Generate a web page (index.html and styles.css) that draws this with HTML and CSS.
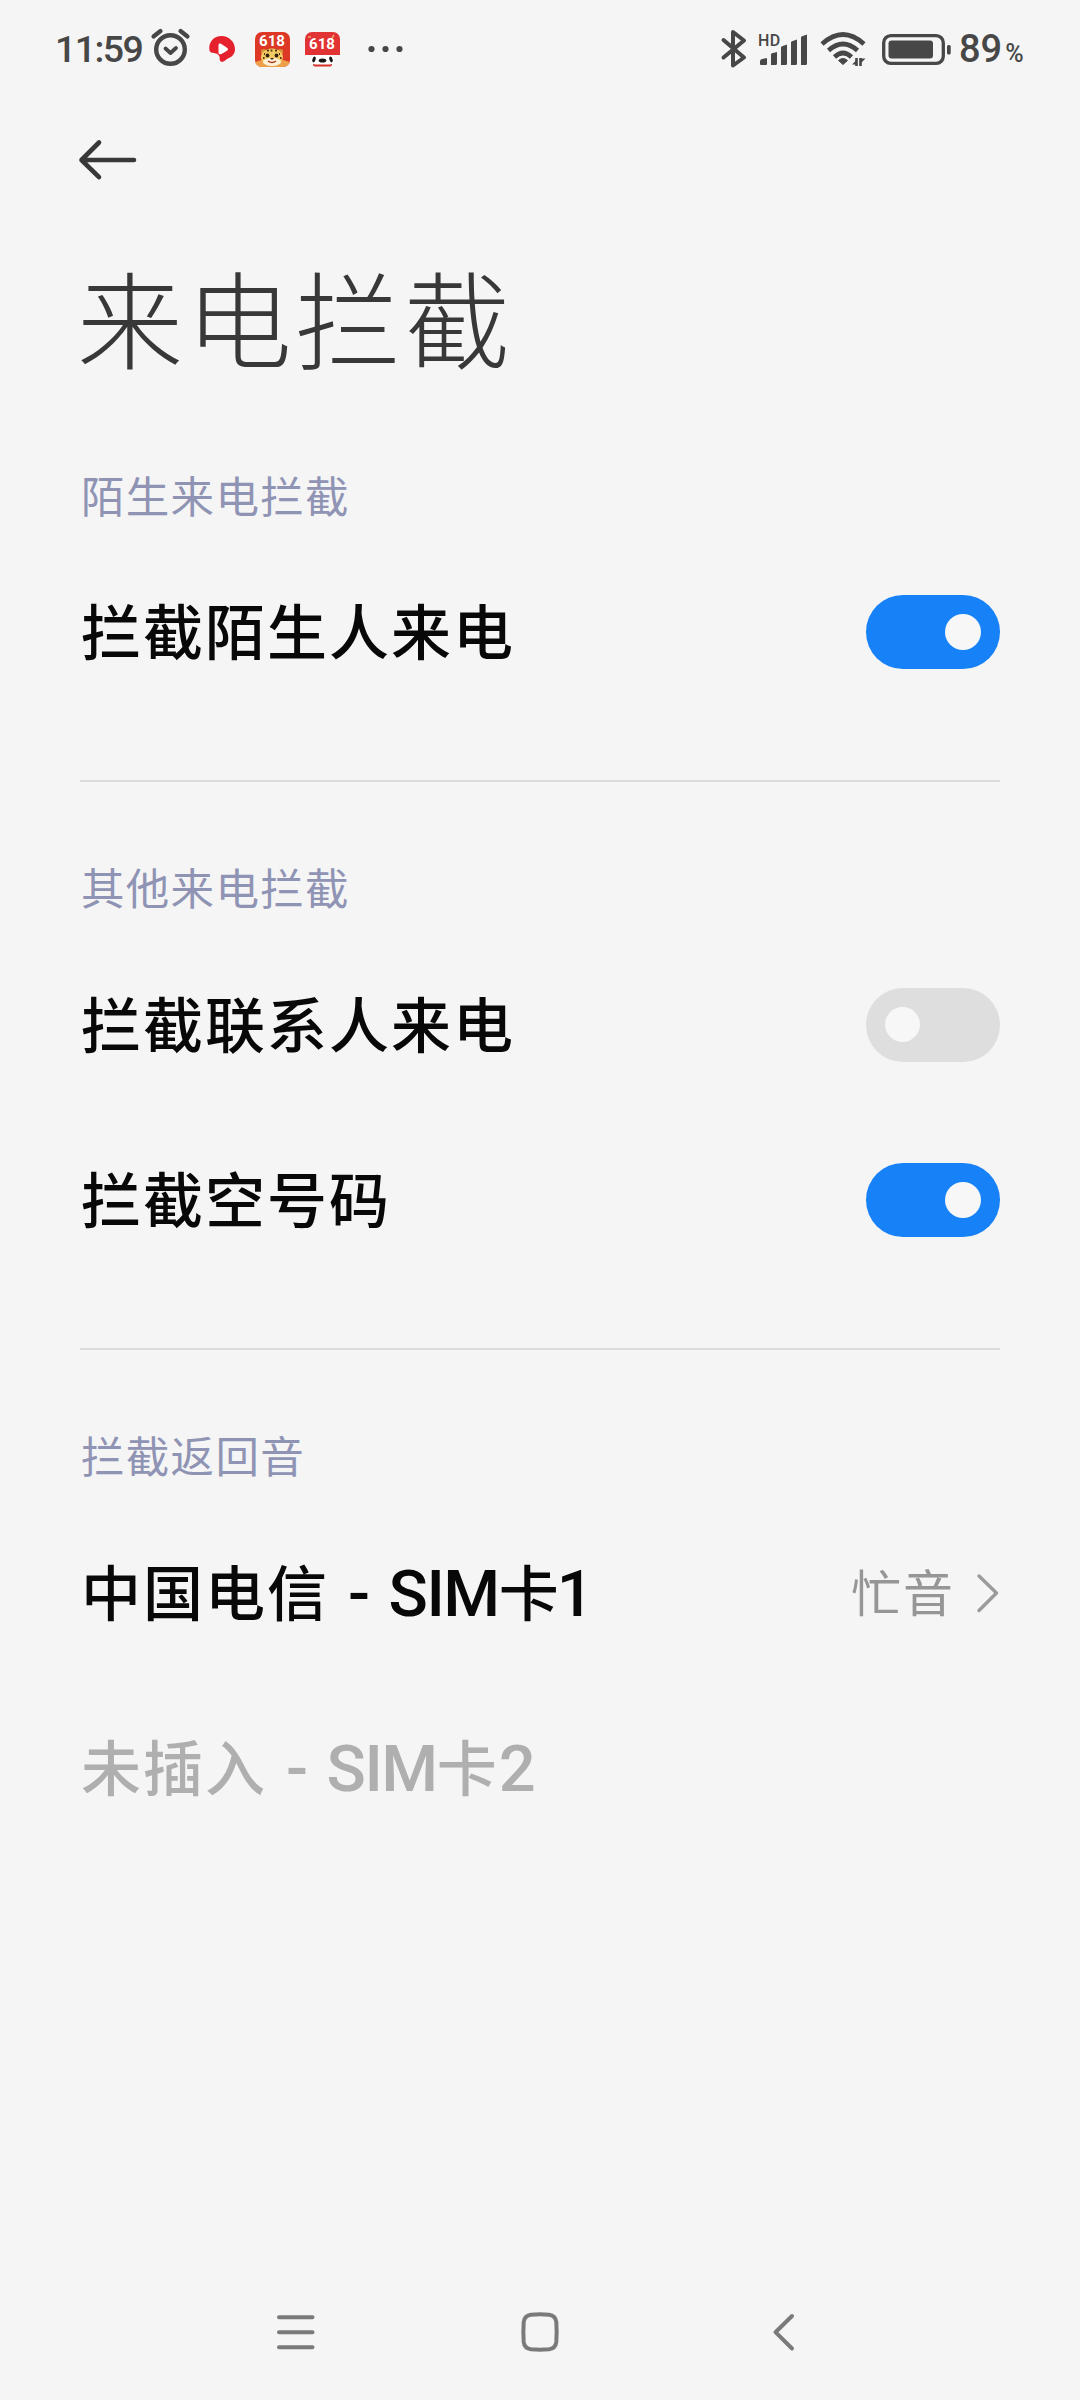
FILE: index.html
```html
<!DOCTYPE html>
<html lang="zh-CN">
<head>
<meta charset="utf-8">
<title>来电拦截</title>
<link rel="stylesheet" href="styles.css">
</head>
<body>
<div class="screen">
  <header class="status">
    <div class="status-left">
      <span class="clock">11:59</span>
      <svg class="alarm" width="42" height="40" viewBox="0 0 42 40" fill="none" stroke="#474747" stroke-linecap="round">
        <circle cx="20.500" cy="21.500" r="14.300" stroke-width="4.400"/>
        <path d="M3.500 8.500 10.500 3M30.500 3 37.500 8.500" stroke-width="4.200"/>
        <path d="M15.500 20.500 20.500 25 26 20" stroke-width="3.800" stroke-linejoin="round"/>
      </svg>
      <svg class="play" width="28" height="28" viewBox="0 0 28 28">
        <path d="M1.500 15.500C0 7 6 1 13.500 1 21 1 27 7 27 14c0 5-3 8-7 9.500-2 .800-3 2.500-5 3.200-2 .600-3.500-.800-3.300-3 .200-2-.700-4-2.700-5-2.500-1-6.500 0-7.500-3.200z" fill="#e5212e"/>
        <path d="M10.500 10c0-1.500 1.200-2 2.500-1.300l6 4.100c1.300.900 1.300 2 0 2.900l-5.500 3.200c-1.500.800-3 .400-3-1.400z" fill="#fff"/>
      </svg>
      <svg class="app" width="35" height="35" viewBox="0 0 35 35">
        <defs><clipPath id="tile"><rect width="35" height="35" rx="7"/></clipPath></defs>
        <g clip-path="url(#tile)">
          <rect width="35" height="35" fill="#dd3826"/>
          <path d="M0 35V30l7-2 21 0 7 2v5z" fill="#eda04a"/>
          <circle cx="8.500" cy="19.500" r="2.600" fill="#d99236"/><circle cx="25.500" cy="19.500" r="2.600" fill="#d99236"/>
          <ellipse cx="17" cy="25" rx="11" ry="8.500" fill="#f0cb62"/>
          <ellipse cx="17" cy="30" rx="9" ry="4" fill="#fff1d5"/>
          <path d="M12 18.500h2M20 18.500h2M9 22h1M24 22h1M16.500 17.500v2M8 26h1.500M25 26h1.500" stroke="#5a3216" stroke-width="1.800"/>
          <circle cx="12.500" cy="23.500" r="1.900" fill="#34200f"/><circle cx="21.500" cy="23.500" r="1.900" fill="#34200f"/>
          <path d="M15 26h4l-2 2z" fill="#43210f"/>
          <path d="M13 29q4 3 8 0" fill="none" stroke="#a43c25" stroke-width="1.500"/>
        </g>
        <text class="promo" x="17" y="14" text-anchor="middle">618</text>
      </svg>
      <svg class="app" width="35" height="35" viewBox="0 0 35 35">
        <g clip-path="url(#tile)">
          <rect width="35" height="23" fill="#e23334"/>
          <rect x="8" y="30" width="19" height="4.500" rx="2" fill="#d72f29"/>
          <rect x="6" y="23" width="23" height="9.500" rx="4.500" fill="#fff"/>
          <ellipse cx="9" cy="27.500" rx="1.600" ry="3" fill="#171717" transform="rotate(20 9 27.500)"/>
          <ellipse cx="26" cy="27.500" rx="1.600" ry="3" fill="#171717" transform="rotate(-20 26 27.500)"/>
          <ellipse cx="17.500" cy="28.500" rx="3.800" ry="2" fill="#171717"/>
          <path d="M3 5h3M29 3l-2 3" stroke="#f4a26d" stroke-width="1.500"/>
        </g>
        <text class="promo" x="17" y="17" text-anchor="middle">618</text>
      </svg>
      <svg class="more" width="36" height="8" viewBox="0 0 36 8" fill="#474747"><circle cx="3.500" cy="4" r="3.100"/><circle cx="17.500" cy="4" r="3.100"/><circle cx="31.500" cy="4" r="3.100"/></svg>
    </div>
    <div class="status-right">
      <svg class="bluetooth" width="26" height="40" viewBox="0 0 26 40" fill="none" stroke="#474747" stroke-width="4" stroke-linejoin="round" stroke-linecap="round">
        <path d="M2.500 11 23 28.500 12 36.500V3L23 11.500 2.500 28.500"/>
      </svg>
      <svg class="signal" width="50" height="36" viewBox="0 -2 50 36" fill="#474747">
        <text class="hd" x="0" y="12.500">HD</text>
        <path d="M2 31v-2.500q0-2 2-2.400l5-1V31q0 1-1 1H3q-1 0-1-1zM13 32V21.500q0-1 1-1.300L19 19v11.500q0 1.500-1.500 1.500zM23 32V14.500q0-1 1-1.300l5-1.700v19q0 1.500-1.500 1.500zM33 32V9.500q0-1 1-1.300l5-1.700v24q0 1.500-1.500 1.500zM43 32V4.500q0-1 1-1.300l5-1.700v29q0 1.500-1.500 1.500z"/>
      </svg>
      <svg class="wifi" width="46" height="36" viewBox="0 0 46 36" fill="none" stroke="#474747" stroke-width="4.600">
        <path d="M2 13Q23-6 44 13M8.500 19.500Q23 6.500 37.500 19.500M14.500 26Q23 18 31.500 26"/>
        <path d="M23 33.500 18.500 29.500Q23 25.500 27.500 29.500z" fill="#474747" stroke="#474747" stroke-width="1"/>
        <path d="M36.500 27v8M40.500 27v8" stroke-width="2.600"/><path d="M37 33.500h-5l5-5zM40.500 27.500h5l-5 5z" fill="#474747" stroke="none"/>
      </svg>
      <svg class="battery" width="69" height="31" viewBox="0 0 69 31">
        <rect x="1.700" y="1.700" width="59.600" height="27.600" rx="7" fill="none" stroke="#474747" stroke-width="3.300"/>
        <rect x="6.500" y="6.500" width="44.500" height="18" rx="3" fill="#474747"/>
        <rect x="65" y="11" width="3.700" height="9.500" rx="1.500" fill="#474747"/>
      </svg>
      <span class="percent">89<small>%</small></span>
    </div>
  </header>

  <div class="toolbar">
    <svg width="60" height="42" viewBox="0 0 60 42" fill="none" stroke="#383838" stroke-width="4.600" stroke-linecap="round" stroke-linejoin="round"><path d="M20 3.500 2.500 21 20 38.200M2.500 21H55"/></svg>
  </div>
  <h1 class="title">来电拦截</h1>

  <main>
    <section class="group">
      <h2 class="label">陌生来电拦截</h2>
      <div class="row"><span class="name">拦截陌生人来电</span><span class="toggle on"></span></div>
    </section>
    <section class="group">
      <h2 class="label">其他来电拦截</h2>
      <div class="row"><span class="name">拦截联系人来电</span><span class="toggle"></span></div>
      <div class="row"><span class="name">拦截空号码</span><span class="toggle on"></span></div>
    </section>
    <section class="group">
      <h2 class="label">拦截返回音</h2>
      <div class="row">
        <span class="name">中国电信<span class="latin dash">-</span><span class="latin">SIM</span>卡<span class="latin digit">1</span></span>
        <span class="value"><span class="choice">忙音</span>
          <svg width="24" height="42" viewBox="0 0 24 42" fill="none" stroke="#9b9b9b" stroke-width="3.400" stroke-linecap="round" stroke-linejoin="round"><path d="M3 4 20.500 21 3 38.500"/></svg>
        </span>
      </div>
      <div class="row disabled"><span class="name">未插入<span class="latin dash">-</span><span class="latin">SIM</span>卡<span class="latin">2</span></span></div>
    </section>
  </main>

  <nav class="navbar">
    <svg width="48" height="48" viewBox="0 0 48 48"><path d="M7 9.200h33.500M7 24.200h33.500M7 39.200h33.500"/></svg>
    <svg width="48" height="48" viewBox="0 0 48 48"><path d="M15 6.700Q24 6 33 6.700 39.500 7.500 40.300 14 41 24 40.300 34 39.500 40.500 33 41.300 24 42 15 41.300 8.500 40.500 7.700 34 7 24 7.700 14 8.500 7.500 15 6.700z"/></svg>
    <svg width="48" height="48" viewBox="0 0 48 48"><path d="M32 8 15.500 24.200 32 40.500"/></svg>
  </nav>
</div>
</body>
</html>
```
FILE: styles.css
```css
* { box-sizing: border-box; }

body {
  margin: 0;
  background: #f5f5f5;
  font-family: "Noto Sans CJK SC", sans-serif;
}

.screen {
  width: 1080px;
  height: 2400px;
  display: flex;
  flex-direction: column;
  background: #f5f5f5;
}

svg { display: block; flex: none; overflow: visible; }

.status {
  height: 98px;
  padding: 0 51px 0 55px;
  display: flex;
  justify-content: space-between;
  align-items: center;
  color: #474747;
  font-family: Roboto, sans-serif;
  font-weight: 500;
}

.status-left, .status-right { display: flex; align-items: center; }
.clock { width: 95px; font-size: 37.500px; letter-spacing: -1.600px; }
.alarm { margin-top: -2px; }
.play { margin-left: 16px; }
.app { margin-left: 19px; }
.app + .app { margin-left: 15px; }
.more { margin-left: 28px; }
.promo { font: 700 15px Roboto, sans-serif; fill: #fff; }

.signal { margin-left: 11px; }
.wifi { margin-left: 12px; }
.battery { margin-left: 16px; }
.hd { font: 500 16px Roboto, sans-serif; letter-spacing: 0.500px; }
.percent { width: 70px; margin-left: 8px; font-size: 38px; white-space: nowrap; }
.percent small { font-size: 25px; margin-left: 3px; }

.toolbar { height: 119px; padding: 41px 79px 0; }

.title {
  height: 196px;
  margin: 0;
  padding-left: 77px;
  font-size: 106px;
  line-height: 196px;
  font-weight: 300;
  letter-spacing: 3px;
  color: #383838;
}

.group { margin: 0 80px; padding: 73px 0 60px; }
.group:first-child { padding-top: 47px; padding-bottom: 61px; }
.group:first-child .label { margin-bottom: 14px; }
.group + .group { border-top: 2px solid #dcdcdc; }
.group + .group { padding-top: 70px; }
.group + .group .label { margin-bottom: 15px; }
.group + .group .row:last-child { margin-bottom: 1px; }

.label {
  height: 70px;
  margin: 0;
  padding-left: 1px;
  font-size: 43.500px;
  line-height: 70px;
  font-weight: 400;
  letter-spacing: 1.300px;
  color: #9094b4;
}

.row {
  height: 175px;
  display: flex;
  justify-content: space-between;
  align-items: center;
}

.name { height: 66px; padding-left: 1px; font-size: 60px; font-weight: 500; letter-spacing: 2px; color: #080808; white-space: nowrap; line-height: 60px; }
.disabled .name { color: #afafaf; }
.latin { font-family: Roboto, sans-serif; font-size: 65px; letter-spacing: -1.500px; line-height: 1; }
.dash { margin: 0 20px 0 19px; }
.digit { margin-left: -4px; }

.toggle { width: 134px; height: 74px; padding: 19px; border-radius: 37px; background: #dedede; }
.toggle::before { content: ""; display: block; width: 35px; height: 35px; border-radius: 50%; background: #f7f7f7; }
.toggle.on { background: #1781f7; }
.toggle.on::before { width: 36px; height: 36px; margin-left: auto; }

.value { display: flex; align-items: center; gap: 21px; font-size: 50px; letter-spacing: 2px; color: #969696; }
.choice { height: 55px; line-height: 50px; }

.navbar {
  height: 136px;
  margin-top: auto;
  padding: 0 272px;
  display: flex;
  justify-content: space-between;
  align-items: center;
}
.navbar svg { fill: none; stroke: #7a7a7a; stroke-width: 4; stroke-linecap: round; stroke-linejoin: round; }
```
